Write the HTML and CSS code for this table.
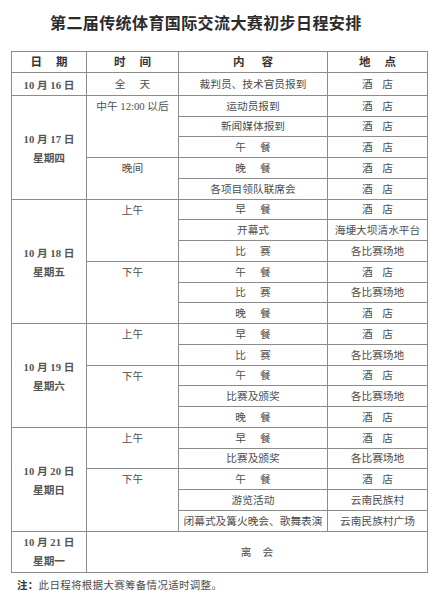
FILE: index.html
```html
<!DOCTYPE html>
<html lang="zh-CN">
<head>
<meta charset="utf-8">
<title>第二届传统体育国际交流大赛初步日程安排</title>
<link rel="stylesheet" href="styles.css">
</head>
<body>
<h1 class="title">第二届传统体育国际交流大赛初步日程安排</h1>
<table class="schedule">
  <colgroup>
    <col class="c-date"><col class="c-time"><col class="c-item"><col class="c-place">
  </colgroup>
  <thead>
    <tr class="head">
      <th><span class="wa">日期</span></th>
      <th><span class="wa">时间</span></th>
      <th><span class="wc">内容</span></th>
      <th><span class="wa">地点</span></th>
    </tr>
  </thead>
  <tbody>
    <tr>
      <td class="date">10 月 16 日</td>
      <td class="time mid"><span class="wa">全天</span></td>
      <td>裁判员、技术官员报到</td>
      <td><span class="wb">酒店</span></td>
    </tr>
    <tr>
      <td class="date" rowspan="5">10 月 17 日<br>星期四</td>
      <td class="time" rowspan="3">中午 12:00 以后</td>
      <td>运动员报到</td>
      <td><span class="wb">酒店</span></td>
    </tr>
    <tr><td>新闻媒体报到</td><td><span class="wb">酒店</span></td></tr>
    <tr><td><span class="wa">午餐</span></td><td><span class="wb">酒店</span></td></tr>
    <tr>
      <td class="time" rowspan="2">晚间</td>
      <td><span class="wa">晚餐</span></td><td><span class="wb">酒店</span></td>
    </tr>
    <tr><td>各项目领队联席会</td><td><span class="wb">酒店</span></td></tr>

    <tr>
      <td class="date" rowspan="6">10 月 18 日<br>星期五</td>
      <td class="time" rowspan="3">上午</td>
      <td><span class="wa">早餐</span></td><td><span class="wb">酒店</span></td>
    </tr>
    <tr><td>开幕式</td><td>海埂大坝清水平台</td></tr>
    <tr><td><span class="wa">比赛</span></td><td>各比赛场地</td></tr>
    <tr>
      <td class="time" rowspan="3">下午</td>
      <td><span class="wa">午餐</span></td><td><span class="wb">酒店</span></td>
    </tr>
    <tr><td><span class="wa">比赛</span></td><td>各比赛场地</td></tr>
    <tr><td><span class="wa">晚餐</span></td><td><span class="wb">酒店</span></td></tr>

    <tr>
      <td class="date" rowspan="5">10 月 19 日<br>星期六</td>
      <td class="time" rowspan="2">上午</td>
      <td><span class="wa">早餐</span></td><td><span class="wb">酒店</span></td>
    </tr>
    <tr><td><span class="wa">比赛</span></td><td>各比赛场地</td></tr>
    <tr>
      <td class="time" rowspan="3">下午</td>
      <td><span class="wa">午餐</span></td><td><span class="wb">酒店</span></td>
    </tr>
    <tr><td>比赛及颁奖</td><td>各比赛场地</td></tr>
    <tr><td><span class="wa">晚餐</span></td><td><span class="wb">酒店</span></td></tr>

    <tr>
      <td class="date" rowspan="5">10 月 20 日<br>星期日</td>
      <td class="time" rowspan="2">上午</td>
      <td><span class="wa">早餐</span></td><td><span class="wb">酒店</span></td>
    </tr>
    <tr><td>比赛及颁奖</td><td>各比赛场地</td></tr>
    <tr>
      <td class="time" rowspan="3">下午</td>
      <td><span class="wa">午餐</span></td><td><span class="wb">酒店</span></td>
    </tr>
    <tr><td>游览活动</td><td>云南民族村</td></tr>
    <tr><td>闭幕式及篝火晚会、歌舞表演</td><td>云南民族村广场</td></tr>

    <tr class="double">
      <td class="date">10 月 21 日<br>星期一</td>
      <td colspan="3"><span class="wd">离会</span></td>
    </tr>
  </tbody>
</table>
<p class="note"><strong>注：</strong>此日程将根据大赛筹备情况适时调整。</p>
</body>
</html>
```

FILE: styles.css
```css
html, body {
  margin: 0;
  padding: 0;
  background: #ffffff;
}

body {
  font-family: "Liberation Serif", "Noto Sans CJK SC", serif;
  color: #4d4d4d;
}

.title {
  margin: 13px 0 0 50px;
  font-family: "Noto Sans CJK SC", sans-serif;
  font-size: 16px;
  line-height: 19px;
  font-weight: 700;
  letter-spacing: 0.4px;
  color: #2b2b2b;
}

.schedule {
  margin: 19px 0 0 11px;
  width: 416px;
  table-layout: fixed;
  border-collapse: collapse;
  border: 1.5px solid #8a8a8a;
  font-size: 10.7px;
}

.c-date { width: 75px; }
.c-time { width: 92px; }
.c-item { width: 149px; }
.c-place { width: 100px; }

.schedule tr {
  height: 20.76px;
}

.schedule th,
.schedule td {
  border: 1px solid #8c8c8c;
  padding: 0;
  line-height: 12px;
  text-align: center;
  vertical-align: middle;
  white-space: nowrap;
}

.schedule th {
  font-size: 11.5px;
  font-weight: 700;
  color: #333333;
}

.schedule td.date {
  font-weight: 700;
  color: #555555;
  line-height: 19px;
  padding-top: 3px;
}

.schedule td.time {
  vertical-align: top;
  padding-top: 4px;
}

.schedule td.time.mid {
  vertical-align: middle;
  padding-top: 0;
}

.schedule tr.double {
  height: 41.5px;
}

.schedule tr.double td.date {
  padding-top: 0;
}

.wa {
  letter-spacing: 14px;
  margin-right: -14px;
}

.wb {
  letter-spacing: 9.5px;
  margin-right: -9.5px;
}

.wc {
  letter-spacing: 17px;
  margin-right: -17px;
}

.wd {
  letter-spacing: 11px;
  margin-right: -11px;
}

.note {
  margin: 6px 0 0 17px;
  font-size: 10.5px;
  line-height: 14px;
  letter-spacing: 0.3px;
  color: #4d4d4d;
}

.note strong {
  font-weight: 700;
  color: #333333;
}
```
